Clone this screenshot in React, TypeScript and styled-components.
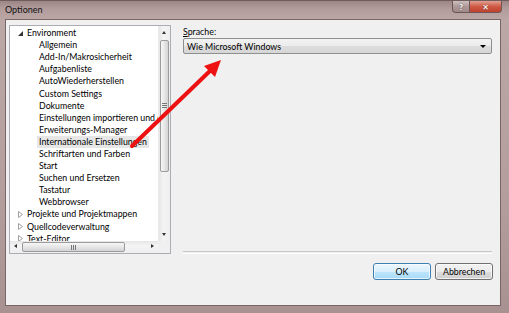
import styled, { createGlobalStyle } from 'styled-components'

const GlobalStyle = createGlobalStyle`
    html, body {
        margin: 0;
        padding: 0;
    }
    body {
        width: 509px;
        height: 313px;
        overflow: hidden;
        background: #8f7a7a;
        font-family: Lato, "Noto Sans", "DejaVu Sans", sans-serif;
    }
`

const Window = styled.div`
    position: relative;
    width: 509px;
    height: 313px;
    display: flex;
    flex-direction: column;
    box-sizing: border-box;
    background: linear-gradient(180deg, #9d8585 0px, #b29c9c 8px, #bca7a7 19px, #b49e9e 60%, #a89191 100%);
    border-top: 1px solid #6f5c5c;
`

const TitleBar = styled.div`
    display: flex;
    align-items: flex-start;
    height: 18px;
    padding-left: 5px;
`

const Title = styled.span`
    font-size: 9px;
    line-height: 17px;
    color: #111;
`

const Controls = styled.div`
    display: flex;
    margin-left: auto;
    margin-right: 7px;
`

const CaptionButton = styled.div<{ $close?: boolean }>`
    height: 12px;
    width: ${(p) => (p.$close ? '32px' : '18px')};
    display: flex;
    align-items: center;
    justify-content: center;
    font-size: 8px;
    font-weight: bold;
    color: #fff;
    box-sizing: border-box;
    border: 1px solid #6e5656;
    border-top: none;
    border-left: ${(p) => (p.$close ? 'none' : '1px solid #6e5656')};
    border-radius: ${(p) => (p.$close ? '0 0 4px 0' : '0 0 0 4px')};
    background: ${(p) =>
        p.$close
            ? 'linear-gradient(180deg, #e3a090 0%, #cf5a45 50%, #c0402c 100%)'
            : 'linear-gradient(180deg, #cfc0c0 0%, #ad9898 50%, #a08a8a 100%)'};
    text-shadow: 0 0 2px #555;
`

const Client = styled.div`
    flex: 1;
    margin: 0 8px 7px 5px;
    border: 1px solid #7a6666;
    background: #f0f0f0;
    display: grid;
    grid-template-columns: 162px 1fr;
    grid-template-rows: 229px auto;
    column-gap: 12px;
    padding: 5px 8px 0 3px;
`

const TreeBox = styled.div`
    border: 1px solid #abadb3;
    background: #fff;
    display: grid;
    grid-template-columns: 148px 12px;
    grid-template-rows: 215px 12px;
    overflow: hidden;
`

const TreeList = styled.div`
    padding-top: 1px;
    overflow: hidden;
`

const Row = styled.div<{ $level: number }>`
    display: flex;
    align-items: center;
    height: 12.1px;
    padding-left: ${(p) => (p.$level === 0 ? 8 : 27)}px;
    white-space: nowrap;
`

const Expander = styled.span`
    width: 7px;
    display: flex;
    align-items: center;
    justify-content: flex-start;
`

const Label = styled.span<{ $selected?: boolean }>`
    font-size: 8.8px;
    line-height: 12px;
    color: #000;
    padding: 0 2px;
    background: ${(p) => (p.$selected ? '#e6e6e6' : 'transparent')};
`

const VScroll = styled.div`
    position: relative;
    background: linear-gradient(90deg, #e6e6e6, #f4f4f4 40%, #eeeeee);
    border-left: 1px solid #eaeaea;
`

const HScroll = styled.div`
    position: relative;
    background: linear-gradient(180deg, #e6e6e6, #f4f4f4 40%, #eeeeee);
`

const Corner = styled.div`
    background: #f0f0f0;
`

const Thumb = styled.div<{ $horizontal?: boolean }>`
    position: absolute;
    box-sizing: border-box;
    border: 1px solid #9b9b9b;
    border-radius: 2px;
    display: flex;
    align-items: center;
    justify-content: center;
    ${(p) =>
        p.$horizontal
            ? `left: 12px; width: 103px; top: 1px; height: 10px;
               background: linear-gradient(180deg, #f7f7f7, #e6e6e6 50%, #d3d3d3);`
            : `top: 14px; height: 132px; left: 1px; width: 9px;
               background: linear-gradient(90deg, #f7f7f7, #e6e6e6 50%, #d3d3d3);`}
`

const Grip = styled.div<{ $horizontal?: boolean }>`
    width: ${(p) => (p.$horizontal ? '6px' : '5px')};
    height: ${(p) => (p.$horizontal ? '5px' : '6px')};
    background: ${(p) =>
        p.$horizontal
            ? 'repeating-linear-gradient(90deg, #777 0 1px, transparent 1px 2px)'
            : 'repeating-linear-gradient(180deg, #777 0 1px, transparent 1px 2px)'};
`

const ScrollArrow = styled.span<{ $pos: string }>`
    position: absolute;
    width: 0;
    height: 0;
    ${(p) => p.$pos}
`

const RightPanel = styled.div`
    display: flex;
    flex-direction: column;
`

const FieldLabel = styled.div`
    font-size: 8.8px;
    line-height: 12px;
    color: #000;
    margin-top: 1px;
`

const Combo = styled.div`
    height: 16px;
    box-sizing: border-box;
    border: 1px solid #8e8f8f;
    border-radius: 2px;
    background: linear-gradient(180deg, #f3f3f3 0%, #ebebeb 50%, #dddddd 51%, #d6d6d6 100%);
    display: flex;
    align-items: center;
    padding: 0 5px 0 3px;
    font-size: 8.8px;
    color: #000;
`

const ComboArrow = styled.span`
    margin-left: auto;
    width: 0;
    height: 0;
    border-left: 3px solid transparent;
    border-right: 3px solid transparent;
    border-top: 3px solid #000;
`

const Separator = styled.div`
    margin-top: auto;
    height: 1px;
    border-top: 1px solid #c8c8c8;
    border-bottom: 1px solid #ffffff;
`

const ButtonRow = styled.div`
    grid-column: 1 / -1;
    display: flex;
    justify-content: flex-end;
    gap: 4px;
    margin-top: 9px;
    margin-right: -1px;
`

const Button = styled.div<{ $default?: boolean }>`
    width: 58px;
    height: 17px;
    box-sizing: border-box;
    border-radius: 3px;
    border: 1px solid ${(p) => (p.$default ? '#3c7fb1' : '#707070')};
    background: ${(p) =>
        p.$default
            ? 'linear-gradient(180deg, #eaf6fd 0%, #d9f0fc 50%, #bee6fd 51%, #a7d9f5 100%)'
            : 'linear-gradient(180deg, #f2f2f2 0%, #ebebeb 50%, #dddddd 51%, #cfcfcf 100%)'};
    box-shadow: inset 0 0 0 1px rgba(255, 255, 255, 0.7);
    display: flex;
    align-items: center;
    justify-content: center;
    font-size: 8.8px;
    color: #000;
`

const Overlay = styled.svg`
    position: absolute;
    left: 0;
    top: 0;
    pointer-events: none;
`

type Item = { label: string; level: number; state?: 'open' | 'closed'; selected?: boolean }

const items: Item[] = [
    { label: 'Environment', level: 0, state: 'open' },
    { label: 'Allgemein', level: 1 },
    { label: 'Add-In/Makrosicherheit', level: 1 },
    { label: 'Aufgabenliste', level: 1 },
    { label: 'AutoWiederherstellen', level: 1 },
    { label: 'Custom Settings', level: 1 },
    { label: 'Dokumente', level: 1 },
    { label: 'Einstellungen importieren und exportieren', level: 1 },
    { label: 'Erweiterungs-Manager', level: 1 },
    { label: 'Internationale Einstellungen', level: 1, selected: true },
    { label: 'Schriftarten und Farben', level: 1 },
    { label: 'Start', level: 1 },
    { label: 'Suchen und Ersetzen', level: 1 },
    { label: 'Tastatur', level: 1 },
    { label: 'Webbrowser', level: 1 },
    { label: 'Projekte und Projektmappen', level: 0, state: 'closed' },
    { label: 'Quellcodeverwaltung', level: 0, state: 'closed' },
    { label: 'Text-Editor', level: 0, state: 'closed' },
]

const ExpandIcon = ({ state }: { state: 'open' | 'closed' }) =>
    state === 'open' ? (
        <svg width='5' height='5' viewBox='0 0 5 5'>
            <polygon points='5,0 5,5 0,5' fill='#333' />
        </svg>
    ) : (
        <svg width='5' height='7' viewBox='0 0 5 7'>
            <polygon points='0.5,0.5 4.5,3.5 0.5,6.5' fill='none' stroke='#a0a0a0' strokeWidth='1' />
        </svg>
    )

export default function App() {
    return (
        <>
            <GlobalStyle />
            <Window>
                <TitleBar>
                    <Title>Optionen</Title>
                    <Controls>
                        <CaptionButton>?</CaptionButton>
                        <CaptionButton $close>✕</CaptionButton>
                    </Controls>
                </TitleBar>
                <Client>
                    <TreeBox>
                        <TreeList>
                            {items.map((item) => (
                                <Row key={item.label} $level={item.level}>
                                    {item.level === 0 && (
                                        <Expander>{item.state && <ExpandIcon state={item.state} />}</Expander>
                                    )}
                                    <Label $selected={item.selected}>{item.label}</Label>
                                </Row>
                            ))}
                        </TreeList>
                        <VScroll>
                            <ScrollArrow
                                $pos='top: 5px; left: 3px; border-left: 2.5px solid transparent; border-right: 2.5px solid transparent; border-bottom: 3px solid #333;'
                            />
                            <Thumb>
                                <Grip />
                            </Thumb>
                            <ScrollArrow
                                $pos='bottom: 5px; left: 3px; border-left: 2.5px solid transparent; border-right: 2.5px solid transparent; border-top: 3px solid #333;'
                            />
                        </VScroll>
                        <HScroll>
                            <ScrollArrow
                                $pos='left: 4px; top: 3px; border-top: 2.5px solid transparent; border-bottom: 2.5px solid transparent; border-right: 3px solid #333;'
                            />
                            <Thumb $horizontal>
                                <Grip $horizontal />
                            </Thumb>
                            <ScrollArrow
                                $pos='right: 4px; top: 3px; border-top: 2.5px solid transparent; border-bottom: 2.5px solid transparent; border-left: 3px solid #333;'
                            />
                        </HScroll>
                        <Corner />
                    </TreeBox>
                    <RightPanel>
                        <FieldLabel>
                            <u>S</u>prache:
                        </FieldLabel>
                        <Combo>
                            Wie Microsoft Windows
                            <ComboArrow />
                        </Combo>
                        <Separator />
                    </RightPanel>
                    <ButtonRow>
                        <Button $default>OK</Button>
                        <Button>Abbrechen</Button>
                    </ButtonRow>
                </Client>
                <Overlay width='509' height='313' viewBox='0 0 509 313'>
                    <line x1='132' y1='145' x2='212' y2='68' stroke='#ee1111' strokeWidth='4' strokeLinecap='round' />
                    <polygon points='221,59 215,76 204,65' fill='#ee1111' />
                </Overlay>
            </Window>
        </>
    )
}
